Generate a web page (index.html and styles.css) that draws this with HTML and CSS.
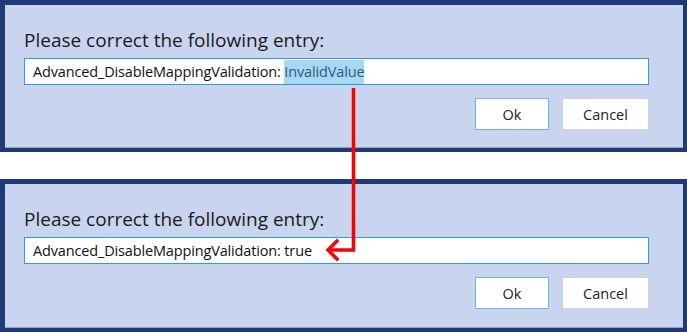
FILE: index.html
```html
<!DOCTYPE html>
<html>
<head>
<meta charset="utf-8">
<link rel="stylesheet" href="styles.css">
</head>
<body>
<div class="page">
  <section class="dialog dialog-top">
    <div class="dialog-body">
      <h1 class="prompt">Please correct the following entry:</h1>
      <div class="entry">Advanced_DisableMappingValidation: <span class="selected">InvalidValue</span></div>
      <div class="actions">
        <button class="btn btn-default">Ok</button>
        <button class="btn">Cancel</button>
      </div>
    </div>
  </section>
  <section class="dialog dialog-bottom">
    <div class="dialog-body">
      <h1 class="prompt">Please correct the following entry:</h1>
      <div class="entry">Advanced_DisableMappingValidation: true</div>
      <div class="actions">
        <button class="btn btn-default">Ok</button>
        <button class="btn">Cancel</button>
      </div>
    </div>
  </section>
  <svg class="arrow" width="687" height="332" viewBox="0 0 687 332">
    <polyline points="353.5,88 353.5,250 328,250" fill="none" stroke="#ff0000" stroke-width="3.5"/>
    <polyline points="337,241 328,250 337,259" fill="none" stroke="#ff0000" stroke-width="3.5" stroke-linecap="square"/>
  </svg>
</div>
</body>
</html>
```

FILE: styles.css
```css
* { box-sizing: border-box; }
html, body { margin: 0; padding: 0; background: #ffffff; }
body { width: 687px; height: 332px; overflow: hidden; font-family: "Open Sans", "Noto Sans", sans-serif; }
.page { position: relative; width: 687px; height: 332px; display: flex; flex-direction: column; gap: 27px; }
.dialog {
  background: #1f3a76;
  padding: 5px 4px 4px 5px;
}
.dialog-top { height: 152px; }
.dialog-bottom { height: 153px; }
.dialog-body {
  height: 100%;
  background: #c9d4ee;
  border-bottom: 1px solid #9aa3b8;
  padding: 22px 34px 0 19px;
  display: flex;
  flex-direction: column;
}
.prompt {
  margin: 0;
  height: 31px;
  font-weight: 400;
  font-size: 19px;
  line-height: 26px;
  color: #1b1b1b;
  letter-spacing: 0;
}
.entry {
  height: 27px;
  background: #ffffff;
  border: 1px solid #23a0e6;
  padding: 0 8px;
  font-size: 14.5px;
  line-height: 25px;
  color: #111111;
  white-space: nowrap;
  letter-spacing: -0.15px;
}
.selected {
  background: #a6d8f2;
  color: #2b5c80;
  padding: 2px 0 3px;
}
.actions {
  margin-top: 13px;
  display: flex;
  justify-content: flex-end;
  gap: 13px;
}
.btn {
  height: 32px;
  width: 87px;
  background: #ffffff;
  border: 1px solid #cfd0d4;
  font-family: inherit;
  font-size: 14.5px;
  color: #222222;
  padding: 0;
}
.btn-default { width: 74px; border-color: #6db8e8; }
.arrow { position: absolute; left: 0; top: 0; pointer-events: none; }
```
